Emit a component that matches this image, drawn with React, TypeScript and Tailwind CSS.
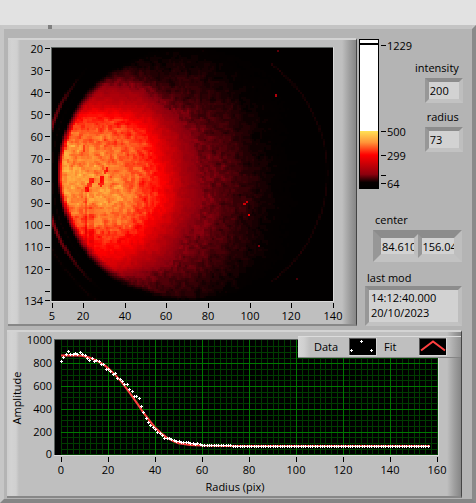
import { useState } from "react";

// one camera pixel of the intensity graph, in drawing units
const COLS = 135;
const ROWS = 114;
const CELL_W = 281 / COLS;
const CELL_H = 252 / ROWS;
const LEVELS = 72;

const STOPS: [number, number[]][] = [
  [0, [0, 0, 0]],
  [0.07, [5, 0, 0]],
  [0.27, [140, 0, 14]],
  [0.54, [255, 0, 0]],
  [0.76, [255, 120, 42]],
  [1, [255, 228, 84]],
];

// beam profile, sampled on a coarse grid
const GX = [63, 83, 103, 123, 143, 163, 183, 203, 223, 250, 283, 333];
const GY = [48, 65, 78, 92, 105, 118, 132, 145, 165, 185, 205, 225, 238, 252, 265, 278, 292, 300];
const BEAM = [
  [0.0, 0.01, 0.02, 0.04, 0.06, 0.06, 0.06, 0.06, 0.05, 0.03, 0.02, 0],
  [0.03, 0.05, 0.07, 0.08, 0.09, 0.09, 0.09, 0.09, 0.07, 0.05, 0.03, 0],
  [0.14, 0.18, 0.21, 0.19, 0.15, 0.11, 0.12, 0.11, 0.08, 0.06, 0.04, 0],
  [0.26, 0.31, 0.33, 0.32, 0.28, 0.15, 0.14, 0.12, 0.1, 0.07, 0.04, 0],
  [0.37, 0.41, 0.41, 0.39, 0.36, 0.26, 0.18, 0.15, 0.12, 0.08, 0.05, 0],
  [0.54, 0.57, 0.59, 0.56, 0.47, 0.34, 0.24, 0.17, 0.14, 0.09, 0.05, 0],
  [0.72, 0.7, 0.69, 0.66, 0.57, 0.4, 0.28, 0.21, 0.15, 0.09, 0.05, 0],
  [0.78, 0.76, 0.74, 0.71, 0.63, 0.45, 0.31, 0.22, 0.17, 0.1, 0.05, 0],
  [0.83, 0.81, 0.78, 0.74, 0.65, 0.5, 0.33, 0.23, 0.19, 0.11, 0.06, 0],
  [0.86, 0.84, 0.81, 0.78, 0.65, 0.54, 0.35, 0.25, 0.19, 0.12, 0.06, 0],
  [0.78, 0.77, 0.82, 0.79, 0.65, 0.52, 0.35, 0.25, 0.18, 0.12, 0.06, 0],
  [0.65, 0.68, 0.74, 0.7, 0.56, 0.43, 0.3, 0.23, 0.17, 0.1, 0.05, 0],
  [0.56, 0.56, 0.6, 0.58, 0.5, 0.37, 0.26, 0.22, 0.16, 0.1, 0.05, 0],
  [0.49, 0.51, 0.53, 0.51, 0.42, 0.33, 0.24, 0.19, 0.14, 0.09, 0.05, 0],
  [0.4, 0.42, 0.44, 0.42, 0.34, 0.27, 0.2, 0.16, 0.12, 0.08, 0.04, 0],
  [0.3, 0.31, 0.31, 0.25, 0.21, 0.18, 0.16, 0.12, 0.1, 0.06, 0.03, 0],
  [0.1, 0.1, 0.12, 0.13, 0.14, 0.15, 0.13, 0.1, 0.08, 0.05, 0.02, 0],
  [0.05, 0.05, 0.05, 0.07, 0.1, 0.11, 0.1, 0.08, 0.06, 0.04, 0.02, 0],
];

function locate(grid: number[], v: number): [number, number] {
  let i = 0;
  while (i < grid.length - 2 && v > grid[i + 1]) i++;
  const k = (v - grid[i]) / (grid[i + 1] - grid[i]);
  return [i, Math.max(0, Math.min(1, k))];
}

function beam(x: number, y: number) {
  const [i, kx] = locate(GX, x);
  const [j, ky] = locate(GY, y);
  const top = BEAM[j][i] * (1 - kx) + BEAM[j][i + 1] * kx;
  const bottom = BEAM[j + 1][i] * (1 - kx) + BEAM[j + 1][i + 1] * kx;
  return top * (1 - ky) + bottom * ky;
}

function heatColor(t: number) {
  for (let i = 1; i < STOPS.length; i++) {
    const [b, cb] = STOPS[i];
    const [a, ca] = STOPS[i - 1];
    if (t <= b) {
      const k = (t - a) / (b - a);
      return `rgb(${ca.map((c, j) => Math.round(c + (cb[j] - c) * k)).join(",")})`;
    }
  }
  return "rgb(255,228,84)";
}

function random(seed: number) {
  let s = seed;
  return () => {
    s = (s * 1664525 + 1013904223) % 4294967296;
    return s / 4294967296;
  };
}

function nearLine(x: number, y: number, x1: number, y1: number, x2: number, y2: number) {
  const len = (x2 - x1) ** 2 + (y2 - y1) ** 2;
  const k = Math.max(0, Math.min(1, ((x - x1) * (x2 - x1) + (y - y1) * (y2 - y1)) / len));
  return Math.hypot(x - x1 - k * (x2 - x1), y - y1 - k * (y2 - y1));
}

const HOT = [
  [275, 96, 0.35],
  [246, 201, 0.42],
  [244, 204, 0.42],
  [248, 215, 0.5],
  [260, 246, 0.26],
  [277, 51, 0.2],
  [296, 279, 0.17],
];

function buildHeat() {
  const rnd = random(41);
  const noise = Array.from({ length: (COLS + 1) * (ROWS + 1) }, () => rnd() - 0.5);
  const n = (c: number, r: number) => noise[r * (COLS + 1) + c];
  const paths: string[] = Array(LEVELS).fill("");
  for (let r = 0; r < ROWS; r++) {
    for (let c = 0; c < COLS; c++) {
      const x = 52 + (c + 0.5) * CELL_W;
      const y = 48 + (r + 0.5) * CELL_H;
      const d = Math.hypot(x - 193, y - 173);
      const grain = n(c, r) * 0.5 + (n(c + 1, r) + n(c, r + 1) + n(c + 1, r + 1)) * 0.45;
      let t = beam(x, y);
      // the grain is strongest in the saturated core and in the dim halo
      t *= 1 + grain * (t > 0.56 ? 0.2 : t > 0.26 ? 0.1 : 0.34);
      if (nearLine(x, y, 107, 168, 105, 173) < 1.5) t *= 0.74;
      if (nearLine(x, y, 102, 178, 101, 184) < 2.2) t *= 0.74;
      if (nearLine(x, y, 92, 180, 87, 191) < 1.8) t *= 0.74;
      if (nearLine(x, y, 84, 146, 84, 151) < 1.6) t *= 0.8;
      if (nearLine(x, y, 86, 192, 87, 252) < 1.3) t *= 0.87;
      if (nearLine(x, y, 92, 205, 92, 250) < 2.4) t *= 0.92;
      t *= Math.max(0, Math.min(1, (136 - d) / (5.5 + Math.abs(y - 173) / 16)));
      // diffraction rings outside of the aperture
      if (x < 150) {
        const fade = Math.exp(-((Math.abs(y - 180) / 98) ** 4));
        t += 0.27 * fade * Math.exp(-(((d - 148.5) / 2.4) ** 2));
        t += 0.09 * fade * Math.exp(-(((d - 141) / 1.6) ** 2));
        t += 0.08 * Math.exp(-(((d - 160) / 3) ** 2)) * (y > 230 ? 1 : 0.2);
      } else if (x > 270) {
        t += 0.1 * Math.exp(-(((d - 134) / 1.6) ** 2));
      }
      for (const [hx, hy, v] of HOT) {
        if (Math.abs(x - hx) < 1.1 && Math.abs(y - hy) < 1.15) t = v;
      }
      const level = Math.max(0, Math.min(LEVELS - 1, Math.round(t * (LEVELS - 1))));
      if (level > 3) paths[level] += `M${c} ${r}h1v1h-1z`;
    }
  }
  return paths;
}

const HEAT = buildHeat();

const DATA = [
  818, 853, 885, 905, 885, 885, 893, 880, 895, 880, 868, 843, 828, 843, 820, 826, 815, 790, 797, 750,
  747, 730, 703, 712, 668, 660, 640, 615, 615, 570, 560, 515, 513, 493, 423, 375, 317, 282, 258, 238,
  220, 200, 185, 168, 147, 147, 142, 132, 125, 118, 115, 105, 110, 105, 105, 98, 98, 92, 98, 90, 85,
];
while (DATA.length < 157) DATA.push(DATA.length < 73 ? 80 : 72);

const FIT = [
  [0, 868], [5, 870], [9, 866], [12, 850], [15, 824], [18, 790], [20, 758], [23, 700], [26, 630], [28, 575],
  [30, 518], [33, 430], [35, 368], [38, 288], [40, 236], [43, 180], [45, 147], [48, 115], [50, 98],
  [55, 82], [60, 77], [70, 74], [157, 74],
];

const px = (v: number) => 61 + v * 2.35;
const py = (v: number) => 454.4 - v * 0.114;

const FONT = "font-['Open_Sans','Segoe_UI',sans-serif] text-[11px]";

function IntensityGraph() {
  const yTicks = [20, 30, 40, 50, 60, 70, 80, 90, 100, 110, 120];
  return (
    <svg viewBox="8 40 348 284" className="block h-auto w-full" role="img" aria-label="Intensity graph">
      <rect x="51" y="47" width="283" height="255" fill="#d9d9d9" />
      <rect x="51" y="47" width="282" height="254" fill="#5c625f" />
      <rect x="52" y="48" width="281" height="253" fill="#020000" />
      <g transform={`translate(52 48) scale(${CELL_W} ${CELL_H})`} shapeRendering="crispEdges">
        {HEAT.map((d, i) => d && <path key={i} d={d} fill={heatColor(i / (LEVELS - 1))} />)}
      </g>
      <g fill="#000" textAnchor="end">
        {yTicks.map((v) => (
          <g key={v}>
            <rect x="45" y={Math.round(48 + (v - 20) * 2.21)} width="5" height="1" />
            <text x="43" y={Math.round(52.5 + (v - 20) * 2.21)}>{v}</text>
          </g>
        ))}
        <rect x="45" y="291" width="5" height="1" />
        <rect x="45" y="300" width="5" height="1" />
        <text x="43" y="305">134</text>
      </g>
      <g fill="#000" textAnchor="middle">
        {[5, 20, 40, 60, 80, 100, 120, 140].map((v) => (
          <g key={v}>
            <rect x={Math.round(52 + (v - 5) * 2.08)} y="303" width="1" height="5" />
            <text x={Math.round(52 + (v - 5) * 2.08)} y="320">{v}</text>
          </g>
        ))}
      </g>
    </svg>
  );
}

function ColorRamp() {
  return (
    <svg viewBox="357 38 58 153" className="block h-[153px] w-[58px] shrink-0" role="img" aria-label="Color ramp">
      <defs>
        <linearGradient id="ramp" x1="0" y1="0" x2="0" y2="1">
          <stop offset="0" stopColor="#ffe254" />
          <stop offset="0.2" stopColor="#ff9438" />
          <stop offset="0.42" stopColor="#ff0000" />
          <stop offset="0.76" stopColor="#8c000e" />
          <stop offset="0.9" stopColor="#080000" />
          <stop offset="1" stopColor="#000" />
        </linearGradient>
      </defs>
      <rect x="359" y="39" width="20" height="150" fill="#000" />
      <rect x="360" y="40" width="18" height="92" fill="#fff" />
      <rect x="360" y="43" width="18" height="2" fill="#000" />
      <rect x="360" y="131" width="18" height="57" fill="url(#ramp)" />
      {[
        [45, "1229"],
        [131, "500"],
        [155, "299"],
        [175, ""],
        [183, "64"],
      ].map(([y, label]) => (
        <g key={y}>
          <rect x="381" y={y} width="5" height="1" />
          <text x="387" y={Number(y) + 5}>{label}</text>
        </g>
      ))}
    </svg>
  );
}

function RadialChart() {
  const minorX = Array.from({ length: 65 }, (_, i) => i * 2.5);
  const minorY = Array.from({ length: 20 }, (_, i) => i * 50);
  return (
    <svg viewBox="7 332 454 164" className="block h-auto w-full" role="img" aria-label="Amplitude against radius">
      <rect x="54" y="339" width="385" height="117" fill="#dcdcdc" />
      <rect x="54" y="339" width="384" height="116" fill="#5c625f" />
      <rect x="55" y="340" width="383" height="115" fill="#000" />
      <g shapeRendering="crispEdges">
        {minorX.map((v) => (
          <rect key={v} x={Math.round(px(v))} y="340" width="1" height="115" fill="#003c00" />
        ))}
        {minorY.map((v) => (
          <rect key={v} x="61" y={Math.round(py(v))} width="377" height="1" fill="#003c00" />
        ))}
        {[20, 40, 60, 80, 100, 120, 140].map((v) => (
          <rect key={v} x={Math.round(px(v))} y="340" width="1" height="115" fill="#007800" />
        ))}
        {[200, 400, 600, 800].map((v) => (
          <rect key={v} x="61" y={Math.round(py(v))} width="377" height="1" fill="#007800" />
        ))}
      </g>
      <polyline
        points={FIT.map(([x, y]) => `${px(x)},${py(y)}`).join(" ")}
        fill="none"
        stroke="#ff4040"
        strokeWidth="2"
      />
      <g fill="#fff" shapeRendering="crispEdges">
        {DATA.map((v, i) => {
          const x = Math.round(px(i));
          const y = Math.round(py(v));
          return <path key={i} d={`M${x} ${y - 1}h1v1h1v1h-1v1h-1v-1h-1v-1h1z`} />;
        })}
      </g>
      <g textAnchor="end">
        {[0, 200, 400, 600, 800, 1000].map((v) => (
          <text key={v} x="52" y={Math.round(py(v) + 4)}>{v}</text>
        ))}
      </g>
      <g textAnchor="middle">
        {[0, 20, 40, 60, 80, 100, 120, 140, 160].map((v) => (
          <g key={v}>
            <rect x={Math.round(px(v))} y="457" width="1" height="5" />
            <text x={Math.round(px(v))} y="474">{v}</text>
          </g>
        ))}
        <text x="235" y="491">Radius (pix)</text>
        <text transform="translate(21 398) rotate(-90)">Amplitude</text>
      </g>
    </svg>
  );
}

function Legend() {
  return (
    <div className="absolute top-1 right-0 flex h-[22px] w-[163px] items-center border-t border-b border-t-[#dcdcdc] border-b-[#858585] bg-[linear-gradient(to_right,#d6d6d6_0,#d0d0d0_6px,#bfbfbf_12px,#bfbfbf_150px,#929292_100%)] pl-4">
      <span className="w-[35px]">Data</span>
      <svg viewBox="0 0 28 18" className="h-[18px] w-7 shrink-0">
        <rect width="28" height="18" fill="#d6d6d6" />
        <rect width="27" height="17" fill="#555" />
        <rect x="1" y="1" width="26" height="16" fill="#000" />
        <path d="M1 12.500h3M2.500 11v3M11 3.500h3M12.500 2v3M21 12.500h3M22.500 11v3" stroke="#fff" />
      </svg>
      <span className="w-[42px] pl-[7px]">Fit</span>
      <svg viewBox="0 0 28 18" className="h-[18px] w-7 shrink-0">
        <rect width="28" height="18" fill="#d6d6d6" />
        <rect width="27" height="17" fill="#555" />
        <rect x="1" y="1" width="26" height="16" fill="#000" />
        <path d="M2 12.500L14 3.500L26 12.500" stroke="#ff4040" strokeWidth="2" fill="none" />
      </svg>
    </div>
  );
}

const SUNKEN = "border-4 border-t-[#8c8c8c] border-l-[#979797] border-r-[#bebebe] border-b-[#c2c2c2]";

function NumberField({ id, label, initial }: { id: string; label: string; initial: string }) {
  const [value, setValue] = useState(initial);
  return (
    <div className="flex flex-col items-end">
      <label htmlFor={id} className="mr-1 h-[18px] leading-4">{label}</label>
      <input
        id={id}
        value={value}
        onChange={(e) => setValue(e.target.value)}
        className={`h-[25px] w-[38px] bg-[#d2d2d2] pl-px outline-none ${SUNKEN}`}
      />
    </div>
  );
}

export default function App() {
  const [center, setCenter] = useState(["84.6101", "156.043"]);
  const [lastMod, setLastMod] = useState("14:12:40.000\n20/10/2023");

  return (
    <div className={`flex min-h-screen flex-col bg-[#e2e2e2] text-black ${FONT}`}>
      <header className="h-[25px]" />
      <main className="flex-1 border-4 border-t-[#c8c8c8] border-l-[#c6c6c6] border-r-[#8a8a8a] border-b-[#858585] bg-[#b4b4b4]">
        <div className="-mt-1 ml-11 h-1 border-l-4 border-l-[#808080] bg-[#c4c4c4]" />
        <div className="mt-[9px] flex pl-1">
          <section className="min-w-0 flex-1 self-start border-t-2 border-r border-b-2 border-t-[#d3d3d3] border-r-[#444] border-b-[#878787] bg-[linear-gradient(to_right,#cdcdcd_0,#d3d3d3_4px,#d0d0d0_9px,#bfbfbf_12px,#bfbfbf_calc(100%-14px),#9c9c9c_calc(100%-6px),#868686_100%)]">
            <IntensityGraph />
          </section>

          <div className="flex w-[115px] shrink-0 flex-col">
            <div className="flex">
              <ColorRamp />
              <div className="mr-2.5 flex flex-1 flex-col items-end gap-1.5 pt-[22px]">
                <NumberField id="intensity" label="intensity" initial="200" />
                <NumberField id="radius" label="radius" initial="73" />
              </div>
            </div>

            <fieldset className="mt-[21px] mr-2.5 ml-4">
              <legend className="h-[18px] pl-0.5 leading-4">center</legend>
              <div className={`flex h-8 ${SUNKEN}`}>
                {center.map((v, i) => (
                  <input
                    key={i}
                    aria-label={i === 0 ? "center x" : "center y"}
                    value={v}
                    onChange={(e) => setCenter(center.map((c, j) => (j === i ? e.target.value : c)))}
                    className={`h-6 w-0 min-w-0 flex-1 bg-[#d2d2d2] pl-px outline-none ${SUNKEN}`}
                  />
                ))}
              </div>
            </fieldset>

            <div className="mt-2 mr-2.5 ml-2 flex flex-col">
              <label htmlFor="last-mod" className="h-4 pl-0.5 leading-4">last mod</label>
              <textarea
                id="last-mod"
                rows={2}
                value={lastMod}
                onChange={(e) => setLastMod(e.target.value)}
                className={`h-10 resize-none overflow-hidden bg-[#d2d2d2] pl-0.5 leading-[15px] outline-none ${SUNKEN}`}
              />
            </div>
          </div>
        </div>

        <section className="relative mt-1 mr-2.5 ml-[3px] border-t-2 border-r border-b-2 border-t-[#d3d3d3] border-r-[#444] border-b-[#878787] bg-[linear-gradient(to_right,#cdcdcd_0,#d3d3d3_4px,#d0d0d0_9px,#bfbfbf_12px,#bfbfbf_calc(100%-14px),#9c9c9c_calc(100%-6px),#868686_100%)]">
          <RadialChart />
          <Legend />
        </section>
      </main>
    </div>
  );
}
